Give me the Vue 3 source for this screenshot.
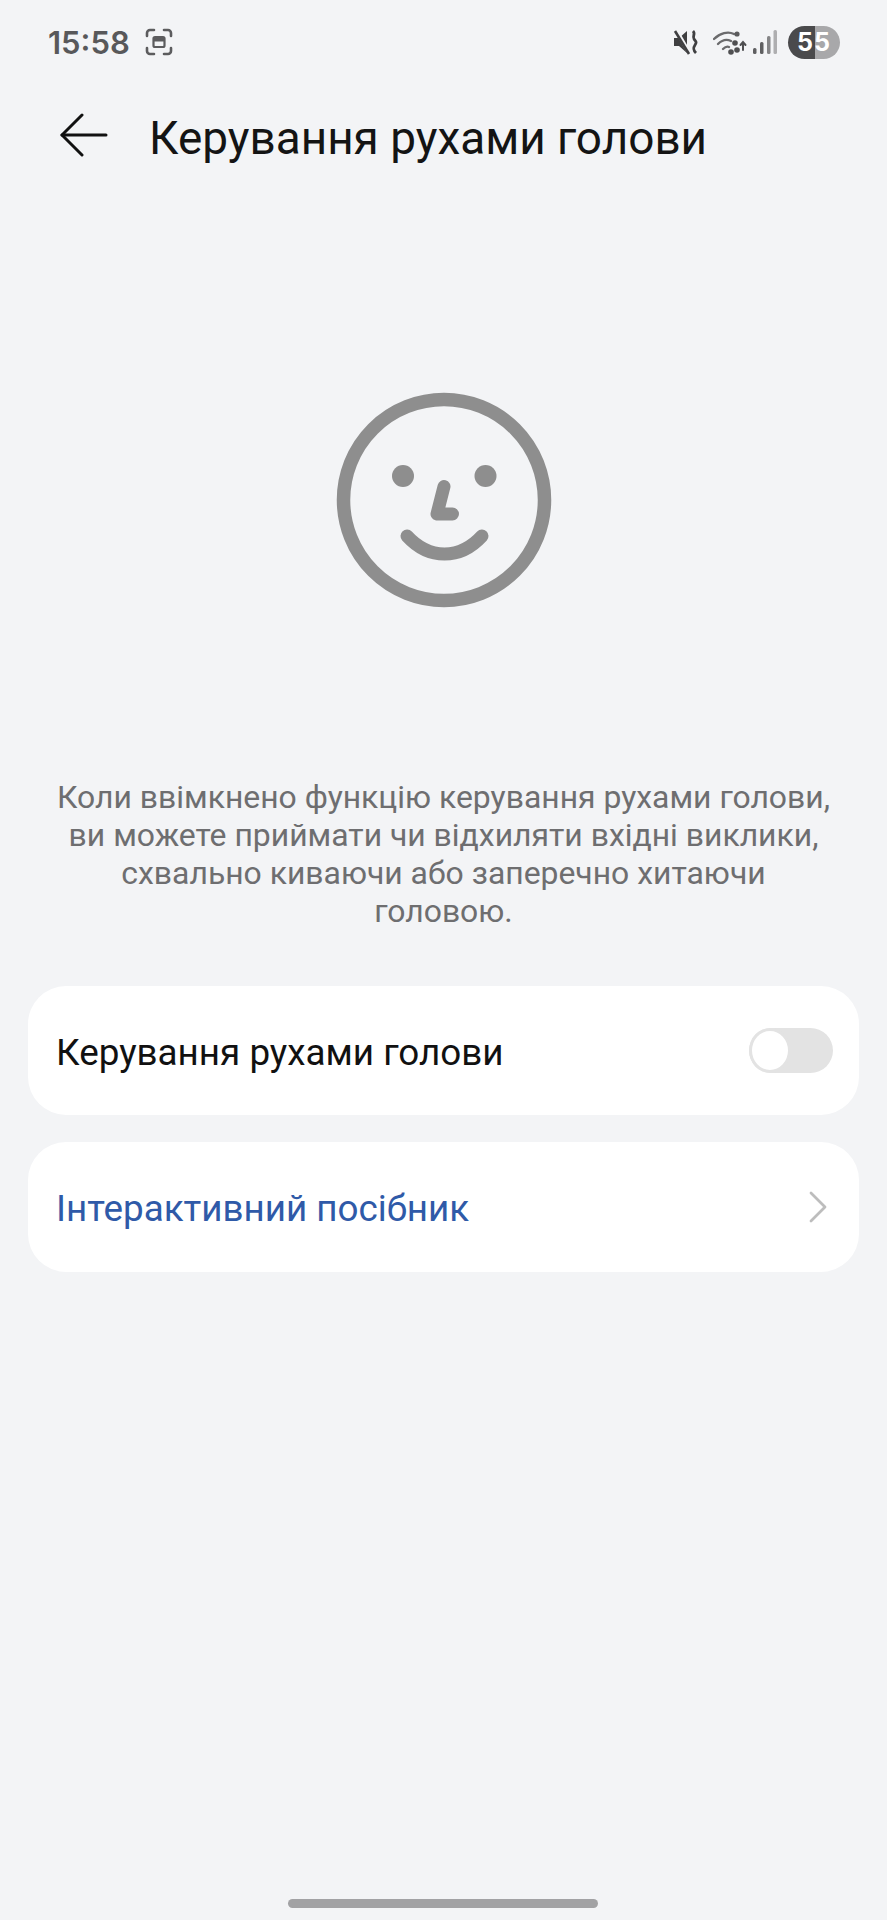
<template>
  <div class="page">
    <div class="status">
      <div class="status__left">
        <span class="status__time">15:58</span>
        <svg class="status__shot" viewBox="0 0 30 30" fill="none" stroke="#5c5c5e" stroke-width="2.6" stroke-linecap="round">
          <path d="M3 9V6a3 3 0 0 1 3-3h4" />
          <path d="M20 3h4a3 3 0 0 1 3 3v3" />
          <path d="M27 21v3a3 3 0 0 1-3 3h-4" />
          <path d="M10 27H6a3 3 0 0 1-3-3v-3" />
          <rect x="9.5" y="10" width="11" height="10" rx="1.5" stroke-width="2.2" />
          <rect x="10" y="11" width="10" height="3.5" fill="#5c5c5e" stroke="none" />
        </svg>
      </div>
      <div class="status__right">
        <svg class="status__mute" viewBox="0 0 26 26" fill="#3f3f41">
          <path d="M1 9h5l8-7v22l-8-7H1z" />
          <path d="M3 1l14 24" stroke="#f3f4f6" stroke-width="4" />
          <path d="M2 2l14 23" stroke="#3f3f41" stroke-width="2.6" />
          <path d="M20 2c3 3-1 5 1 8s3 3 1 6-2 5 1 8" fill="none" stroke="#3f3f41" stroke-width="2.8" />
        </svg>
        <svg class="status__wifi" viewBox="0 0 34 26" fill="none" stroke="#6a6a6c" stroke-width="2.4" stroke-linecap="round">
          <path d="M1 10c6-6 14-8 20-5" />
          <path d="M5 15c4-4 9-5 13-3" />
          <path d="M10 20c2-2 4-3 6-2" />
          <circle cx="24" cy="5" r="2.6" fill="#5a5a5c" stroke="none" />
          <circle cx="22" cy="14" r="2.8" fill="#4f4f51" stroke="none" />
          <circle cx="18" cy="23" r="2.8" fill="#4f4f51" stroke="none" />
          <circle cx="24" cy="21" r="2.8" fill="#4f4f51" stroke="none" />
          <path d="M30 13v8M27.5 16l2.5-3 2.5 3" stroke="#4f4f51" stroke-width="2" />
        </svg>
        <svg class="status__signal" viewBox="0 0 24 24" fill="#5f5f61">
          <rect x="0" y="18" width="3.5" height="6" rx="1.5" />
          <rect x="7" y="12" width="3.5" height="12" rx="1.5" />
          <rect x="14" y="6" width="3.5" height="18" rx="1.5" fill="#858587" />
          <rect x="20.5" y="0" width="3.5" height="24" rx="1.5" fill="#aeaeb0" />
        </svg>
        <div class="battery"><span>55</span></div>
      </div>
    </div>

    <header class="bar">
      <svg class="bar__back" viewBox="0 0 48 44" fill="none" stroke="#111" stroke-width="3" stroke-linecap="round" stroke-linejoin="round">
        <path d="M22 2L2 22l20 20" />
        <path d="M2 22h44" />
      </svg>
      <h1 class="bar__title">Керування рухами голови</h1>
    </header>

    <div class="face">
      <svg viewBox="0 0 216 216" fill="none" stroke="#8e8e8e" stroke-width="13.5" stroke-linecap="round" stroke-linejoin="round">
        <circle cx="108" cy="108" r="100.5" />
        <circle cx="67" cy="84" r="11" fill="#8e8e8e" stroke="none" />
        <circle cx="149.5" cy="84" r="11" fill="#8e8e8e" stroke="none" />
        <path d="M108 94.5L101 122h15.5" stroke-width="13" />
        <path d="M71 144c22 24 53 24 75 0" stroke-width="13" />
      </svg>
    </div>

    <p class="desc">Коли ввімкнено функцію керування рухами голови, ви можете приймати чи відхиляти вхідні виклики, схвально киваючи або заперечно хитаючи головою.</p>

    <div class="cards">
      <div class="card">
        <span class="card__label">Керування рухами голови</span>
        <div class="toggle"><span class="toggle__knob"></span></div>
      </div>
      <div class="card">
        <span class="card__label card__label--link">Інтерактивний посібник</span>
        <svg class="card__chevron" viewBox="0 0 18 32" fill="none" stroke="#bdbdbd" stroke-width="2.8" stroke-linecap="round" stroke-linejoin="round">
          <path d="M2 2l14 14L2 30" />
        </svg>
      </div>
    </div>

    <div class="home"></div>
  </div>
</template>

<script setup>
</script>

<style>
html, body { margin: 0; background: #f3f4f6; }
</style>

<style scoped>
.page {
  position: relative;
  box-sizing: border-box;
  width: 887px;
  height: 1920px;
  background: #f3f4f6;
  font-family: Roboto, "Noto Sans", sans-serif;
  display: flex;
  flex-direction: column;
}
.status {
  height: 84px;
  box-sizing: border-box;
  padding: 0 47px 0 48px;
  display: flex;
  align-items: center;
  justify-content: space-between;
}
.status__left, .status__right { display: flex; align-items: center; }
.status__time {
  font-family: Inter, Roboto, sans-serif;
  font-size: 31px;
  font-weight: 600;
  color: #58585a;
}
.status__shot { width: 30px; height: 30px; margin-left: 14px; }
.status__mute { width: 26px; height: 26px; }
.status__wifi { width: 34px; height: 26px; margin-left: 14px; }
.status__signal { width: 24px; height: 24px; margin-left: 6px; }
.battery {
  width: 52px;
  height: 33px;
  margin-left: 11px;
  border-radius: 17px;
  background: linear-gradient(90deg, #4a4a4c 0 52%, #a8a8aa 52% 100%);
  color: #fff;
  font-family: Inter, Roboto, sans-serif;
  font-size: 25px;
  font-weight: 700;
  line-height: 33px;
  letter-spacing: 1px;
  text-align: center;
}
.bar {
  height: 108px;
  padding-left: 60px;
  display: flex;
  align-items: center;
}
.bar__back { width: 48px; height: 44px; margin-top: -6px; }
.bar__title {
  margin: 0 0 0 41px;
  font-size: 45.9px;
  font-weight: 400;
  color: #141414;
  white-space: nowrap;
}
.face {
  margin-top: 200px;
  display: flex;
  justify-content: center;
}
.face svg { width: 216px; height: 216px; }
.desc {
  margin: 170px 0 0;
  padding: 0 52px;
  font-size: 31.9px;
  line-height: 38px;
  color: #6e6e70;
  text-align: center;
}
.cards {
  margin-top: 56px;
  padding: 0 28px;
  display: flex;
  flex-direction: column;
  gap: 27px;
}
.card {
  height: 129px;
  box-sizing: border-box;
  padding: 0 26px 0 28px;
  background: #fff;
  border-radius: 38px;
  display: flex;
  align-items: center;
  justify-content: space-between;
}
.card + .card { height: 130px; }
.card__label { padding-top: 3px; font-size: 36.8px; color: #111; }
.card__label--link { color: #2f5aa8; }
.card__chevron { width: 18px; height: 32px; margin-right: 6px; }
.toggle {
  width: 84px;
  height: 45px;
  border-radius: 23px;
  background: #e3e3e3;
  display: flex;
  align-items: center;
}
.toggle__knob {
  box-sizing: border-box;
  width: 42px;
  height: 45px;
  border-radius: 50%;
  background: #fff;
  border: 3px solid #e3e3e3;
}
.home {
  position: absolute;
  left: 288px;
  top: 1899px;
  width: 310px;
  height: 9px;
  border-radius: 5px;
  background: #a2a2a4;
}
</style>
